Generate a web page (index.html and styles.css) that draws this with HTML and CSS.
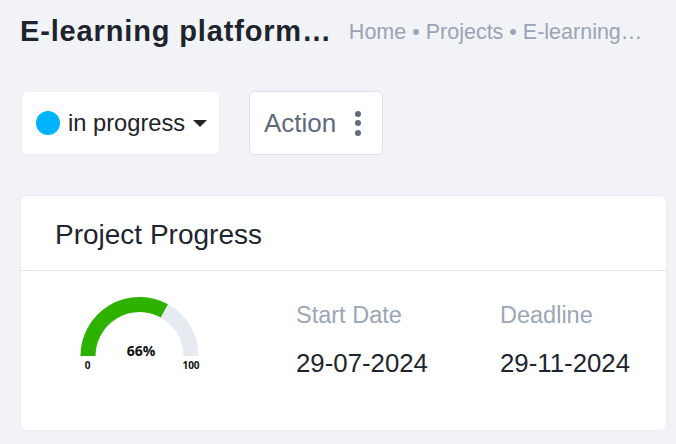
FILE: index.html
```html
<!DOCTYPE html>
<html lang="en">
<head>
<meta charset="utf-8">
<title>E-learning platform</title>
<link rel="stylesheet" href="styles.css">
</head>
<body>
<div class="page">
  <header class="topbar">
    <h1 class="title">E-learning platform…</h1>
    <nav class="crumbs">Home • Projects • E-learning…</nav>
  </header>

  <div class="toolbar">
    <button class="btn btn-status">
      <span class="dot"></span>
      <span class="status-text">in progress</span>
      <span class="caret"></span>
    </button>
    <button class="btn btn-action">
      <span class="action-text">Action</span>
      <span class="kebab"><i></i><i></i><i></i></span>
    </button>
  </div>

  <section class="card">
    <div class="card-head">Project Progress</div>
    <div class="card-body">
      <svg class="gauge" width="140" height="90" viewBox="0 0 140 90">
        <path d="M 18 67 A 51.5 51.5 0 0 1 121 67" fill="none" stroke="#e6ebf2" stroke-width="15"/>
        <path d="M 18 67 A 51.5 51.5 0 0 1 94.3 21.9" fill="none" stroke="#2eb200" stroke-width="15"/>
        <text class="g-value" x="71" y="67" text-anchor="middle">66%</text>
        <text class="g-label" x="17.5" y="79.5" text-anchor="middle">0</text>
        <text class="g-label" x="121" y="79.5" text-anchor="middle">100</text>
      </svg>
      <div class="dates">
        <div class="date-col">
          <div class="date-label">Start Date</div>
          <div class="date-value">29-07-2024</div>
        </div>
        <div class="date-col">
          <div class="date-label">Deadline</div>
          <div class="date-value">29-11-2024</div>
        </div>
      </div>
    </div>
  </section>
</div>
</body>
</html>
```

FILE: styles.css
```css
* { box-sizing: border-box; }
html, body { margin: 0; padding: 0; }
body {
  background: #f1f3f7;
  font-family: "Liberation Sans", Arial, sans-serif;
  color: #1f2530;
  width: 676px;
  height: 444px;
  overflow: hidden;
}
.page {
  padding: 14px 9px 0 20px;
}
.topbar {
  display: flex;
  align-items: baseline;
  gap: 17px;
  white-space: nowrap;
}
.title {
  margin: 0;
  font-size: 29px;
  line-height: 34px;
  font-weight: 700;
  color: #1e242d;
  letter-spacing: 0.85px;
}
.crumbs {
  font-size: 21.5px;
  color: #9aa4b4;
  position: relative;
  top: -2px;
}
.toolbar {
  display: flex;
  gap: 29px;
  margin-top: 43px;
  margin-left: 1px;
}
.btn {
  display: flex;
  align-items: center;
  height: 64px;
  background: #fff;
  border-radius: 6px;
  font-family: "Liberation Sans", Arial, sans-serif;
  padding: 0;
  margin: 0;
  cursor: pointer;
}
.btn-status {
  width: 199px;
  padding-left: 14px;
  border: 1px solid #eef0f4;
}
.dot {
  width: 24px;
  height: 24px;
  border-radius: 50%;
  background: #00b2ff;
  flex: none;
}
.status-text {
  margin-left: 8px;
  font-size: 23.7px;
  color: #1f2329;
}
.caret {
  margin-left: 8px;
  width: 0;
  height: 0;
  border-left: 7px solid transparent;
  border-right: 7px solid transparent;
  border-top: 7px solid #1f2329;
}
.btn-action {
  width: 134px;
  padding-left: 14px;
  border: 1px solid #dde0e6;
}
.action-text {
  font-size: 26px;
  color: #5f6b7c;
}
.kebab {
  display: flex;
  flex-direction: column;
  gap: 3.5px;
  margin-left: 19px;
}
.kebab i {
  display: block;
  width: 6px;
  height: 6px;
  border-radius: 50%;
  background: #5f6b7c;
}
.card {
  margin-top: 40px;
  background: #fff;
  border: 1px solid #eaecf1;
  border-radius: 7px;
  height: 236px;
}
.card-head {
  height: 75px;
  padding: 23px 0 0 34px;
  font-size: 28px;
  line-height: 32px;
  color: #1f2530;
  border-bottom: 1px solid #e3e5ea;
}
.card-body {
  display: flex;
  align-items: flex-start;
  padding: 18px 0 0 49px;
}
.gauge { display: block; flex: none; }
.g-value {
  font-family: "Open Sans", "DejaVu Sans", sans-serif;
  font-weight: 700;
  font-size: 14px;
  fill: #111;
}
.g-label {
  font-family: "Open Sans", "DejaVu Sans", sans-serif;
  font-weight: 700;
  font-size: 10px;
  fill: #111;
}
.dates {
  display: flex;
  margin-left: 86px;
}
.date-col {
  width: 204px;
}
.date-label {
  font-size: 23.5px;
  line-height: 30px;
  color: #9ba6b6;
  margin-top: 11px;
}
.date-value {
  font-size: 25.8px;
  line-height: 32px;
  color: #1f2530;
  margin-top: 17px;
}
```
